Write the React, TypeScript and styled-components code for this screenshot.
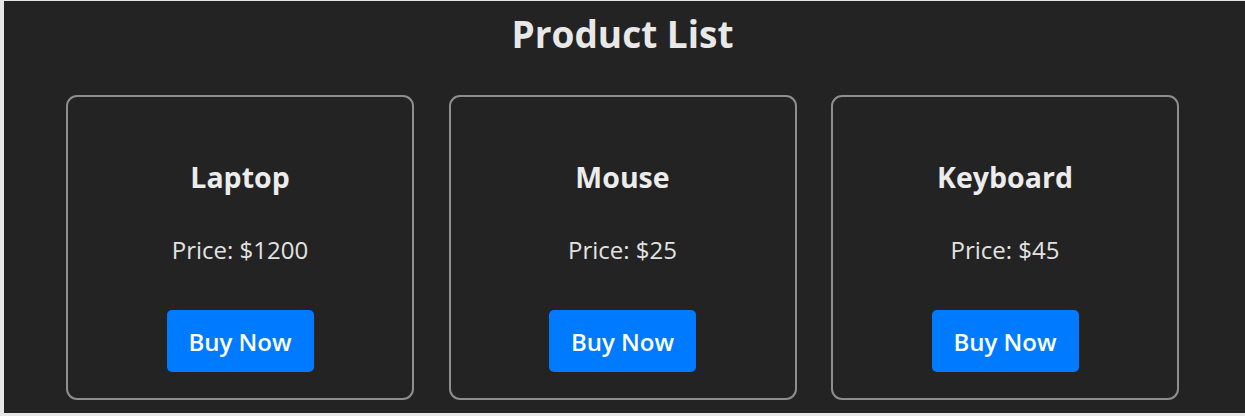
import React from "react";
import styled, { createGlobalStyle } from "styled-components";

const GlobalStyle = createGlobalStyle`
  html, body {
    margin: 0;
    padding: 0;
    background: #e6e6e6;
  }
  body {
    font-family: "Open Sans", "Noto Sans", "Liberation Sans", sans-serif;
  }
`;

const Frame = styled.div`
  padding: 1px 0 3px 4px;
  height: 416px;
  box-sizing: border-box;
`;

const Panel = styled.main`
  background: #232323;
  height: 412px;
  display: flex;
  flex-direction: column;
  align-items: center;
  box-sizing: border-box;
  padding-top: 10px;
  padding-right: 4px;
`;

const Title = styled.h1`
  margin: 0;
  font-size: 37px;
  line-height: 46px;
  font-weight: 700;
  color: #e8e8e8;
`;

const Grid = styled.div`
  display: flex;
  gap: 34.5px;
  margin-top: 38px;
`;

const Card = styled.section`
  width: 348px;
  height: 305px;
  box-sizing: border-box;
  border: 2px solid #8e8e8e;
  border-radius: 11px;
  display: flex;
  flex-direction: column;
  align-items: center;
  padding-top: 64px;
`;

const Name = styled.h2`
  margin: 0;
  font-size: 28.5px;
  line-height: 32px;
  font-weight: 700;
  color: #ececec;
`;

const Price = styled.p`
  margin: 42px 0 0;
  font-size: 24px;
  line-height: 30px;
  font-weight: 400;
  color: #e2e2e2;
`;

const BuyButton = styled.button`
  margin-top: 45px;
  width: 147px;
  height: 62px;
  border: none;
  border-radius: 5px;
  background: #007bff;
  color: #ffffff;
  font-family: inherit;
  font-size: 24px;
  font-weight: 600;
  padding: 0;
  cursor: pointer;
`;

const products = [
  { name: "Laptop", price: 1200 },
  { name: "Mouse", price: 25 },
  { name: "Keyboard", price: 45 },
];

export default function App() {
  return (
    <>
      <GlobalStyle />
      <Frame>
        <Panel>
          <Title>Product List</Title>
          <Grid>
            {products.map((p) => (
              <Card key={p.name}>
                <Name>{p.name}</Name>
                <Price>Price: ${p.price}</Price>
                <BuyButton>Buy Now</BuyButton>
              </Card>
            ))}
          </Grid>
        </Panel>
      </Frame>
    </>
  );
}
